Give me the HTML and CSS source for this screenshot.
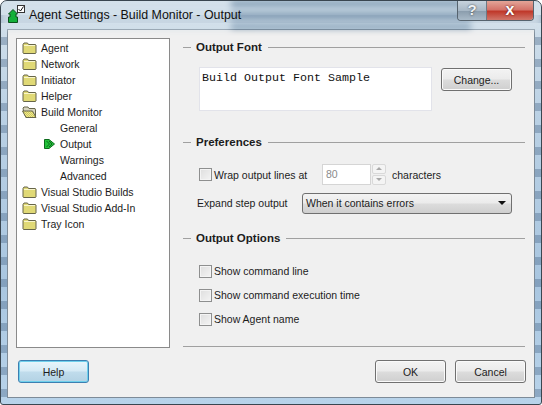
FILE: index.html
```html
<!DOCTYPE html>
<html lang="en">

<head>
  <meta charset="UTF-8">
  <title>Agent Settings - Build Monitor - Output</title>
  <link rel="stylesheet" href="styles.css">
</head>

<body>
  <svg class="defs" width="0" height="0">
    <pattern id="dither" width="2" height="2" patternUnits="userSpaceOnUse">
      <rect width="2" height="2" fill="#f0ea8c" />
      <rect width="1" height="1" fill="#cfc860" />
      <rect x="1" y="1" width="1" height="1" fill="#cfc860" />
    </pattern>
    <symbol id="folder" viewBox="0 0 14 12">
      <path d="M0.5 2.5 L1.5 1 L5 1 L6 2.5 L13 2.5 L13.5 3 L13.5 11 L13 11.5 L1 11.5 L0.5 11 Z" fill="url(#dither)" stroke="#66654a" />
      <path d="M1.5 3.5 L12.5 3.5" stroke="#f8f5cc" />
    </symbol>
    <symbol id="folder-open" viewBox="0 0 15 12">
      <path d="M1.5 5 L1 2 L2 1 L6 1 L7 2.5 L13 2.5 L13.5 4 L13.5 11.5 L4 11.5 Z" fill="#d8d6c0" stroke="#66654a" />
      <path d="M0.5 5 L10.5 5 L14 11.5 L4 11.5 Z" fill="url(#dither)" stroke="#66654a" />
    </symbol>
  </svg>

  <div class="window">
    <div class="glass"></div>

    <div class="titlebar">
      <svg class="app-icon" width="17" height="19" viewBox="0 0 17 19">
        <path d="M0.5 10 L5 5.5 L9.5 10 L8 10 L8 13 L9.5 13 L9.5 18.5 L0.5 18.5 L0.5 13 L2 13 L2 10 Z" fill="#12b03a" stroke="#0a4f1c" />
        <rect x="9.5" y="1.5" width="7" height="7" fill="#fff" stroke="#333" />
        <path d="M10.5 5 L12.5 7 L15.5 2.5" fill="none" stroke="#111" />
      </svg>
      <span class="title">Agent Settings - Build Monitor - Output</span>
      <div class="caption">
        <span class="caption-help">?</span>
        <span class="caption-close">x</span>
      </div>
    </div>

    <div class="client">
      <div class="main">
        <ul class="tree">
          <li><svg class="fold"><use href="#folder" /></svg>Agent</li>
          <li><svg class="fold"><use href="#folder" /></svg>Network</li>
          <li><svg class="fold"><use href="#folder" /></svg>Initiator</li>
          <li><svg class="fold"><use href="#folder" /></svg>Helper</li>
          <li><svg class="fold"><use href="#folder-open" /></svg>Build Monitor</li>
          <li class="child">General</li>
          <li class="child current">
            <svg class="arrow" width="11" height="10" viewBox="0 0 11 10">
              <path d="M0.5 0.5 L5 0.5 L10.5 5 L5 9.5 L0.5 9.5 Z" fill="#22c33a" stroke="#0c6a1c" />
              <path d="M2.5 2 L5.5 5 L2.5 8 M5 2 L8 5 L5 8" fill="none" stroke="#0c6a1c" />
            </svg>Output
          </li>
          <li class="child">Warnings</li>
          <li class="child">Advanced</li>
          <li><svg class="fold"><use href="#folder" /></svg>Visual Studio Builds</li>
          <li><svg class="fold"><use href="#folder" /></svg>Visual Studio Add-In</li>
          <li><svg class="fold"><use href="#folder" /></svg>Tray Icon</li>
        </ul>

        <div class="panel">
          <h2 class="heading">Output Font</h2>
          <div class="font-row">
            <div class="sample">Build Output Font Sample</div>
            <button class="btn">Change...</button>
          </div>

          <h2 class="heading prefs">Preferences</h2>
          <div class="wrap-row">
            <span class="check"></span>
            <span class="wrap-label">Wrap output lines at</span>
            <span class="spin-input">80</span>
            <span class="spin">
              <span class="spin-up"></span>
              <span class="spin-down"></span>
            </span>
            <span class="chars">characters</span>
          </div>
          <div class="expand-row">
            <span>Expand step output</span>
            <div class="combo">When it contains errors<span class="combo-arrow"></span></div>
          </div>

          <h2 class="heading options">Output Options</h2>
          <div class="check-list">
            <div class="check-row"><span class="check"></span>Show command line</div>
            <div class="check-row"><span class="check"></span>Show command execution time</div>
            <div class="check-row"><span class="check"></span>Show Agent name</div>
          </div>

          <div class="rule"></div>
        </div>
      </div>

      <div class="footer">
        <button class="btn btn-focus">Help</button>
        <div class="footer-right">
          <button class="btn">OK</button>
          <button class="btn">Cancel</button>
        </div>
      </div>
    </div>
  </div>
</body>

</html>
```

FILE: styles.css
```css
html,
body {
  margin: 0;
  height: 100%;
  background: #fff;
}

body {
  font-family: "Liberation Sans", Arial, sans-serif;
  font-size: 10.5px;
  color: #1c1c1c;
  overflow: hidden;
}

.defs {
  display: block;
  height: 0;
}

.window {
  position: relative;
  box-sizing: border-box;
  width: 542px;
  height: 405px;
  border: 1px solid #3a4650;
  border-radius: 7px 7px 3px 3px;
  overflow: hidden;
  background:
    repeating-linear-gradient(transparent 0, transparent 14px, rgba(60, 90, 125, 0.35) 14px, rgba(60, 90, 125, 0.35) 22px),
    linear-gradient(#d5e2ec, #b9d0e4 30%, #a9c6e0 70%, #b8d3ea);
}

/* blurred desktop behind the aero frame */
.glass {
  position: absolute;
  top: 0;
  left: 0;
  width: 100%;
  height: 28px;
  background:
    repeating-linear-gradient(#5f7f9c 0, #5f7f9c 5px, #c6d6e3 5px, #c6d6e3 12px) 230px 0 / 240px 100% no-repeat,
    #d3e0ea;
  filter: blur(3px);
  opacity: 0.8;
}

.titlebar {
  position: relative;
  display: flex;
  align-items: flex-start;
  height: 28px;
  padding-left: 7px;
}

.app-icon {
  margin-top: 3px;
}

.title {
  margin-left: 4px;
  margin-top: 4px;
  font-size: 12.4px;
  line-height: 20px;
  color: #111;
}

.caption {
  display: flex;
  margin-left: auto;
  margin-right: 7px;
  height: 19px;
  border: 1px solid #56636e;
  border-top: none;
  border-radius: 0 0 4px 4px;
  overflow: hidden;
}

.caption-help {
  width: 28px;
  text-align: center;
  font-size: 15px;
  font-weight: 700;
  line-height: 18px;
  color: #eef2f5;
  text-shadow: 0 0 2px #333;
  background: linear-gradient(#c7d3dd, #a8b8c6 50%, #8c9eae 55%, #a9bac8);
  border-right: 1px solid #6d7a85;
}

.caption-close {
  width: 46px;
  text-align: center;
  font-size: 16px;
  font-weight: 700;
  line-height: 17px;
  color: #fff;
  text-shadow: 0 0 2px #400;
  background: linear-gradient(#e3a598, #d4746a 45%, #c0392b 55%, #d0766a);
}

.client {
  box-sizing: border-box;
  width: 528px;
  height: 369px;
  margin-left: 6px;
  border: 1px solid #7d8b98;
  background: #f0f0f0;
  padding: 8px 8px 0;
}

.main {
  display: flex;
  height: 310px;
}

.tree {
  box-sizing: border-box;
  width: 154px;
  margin: 0;
  padding: 1px 0 0 5px;
  list-style: none;
  background: #fff;
  border: 1px solid #8a8a8a;
}

.tree li {
  display: flex;
  align-items: center;
  height: 16px;
  white-space: nowrap;
}

.fold {
  width: 15px;
  height: 12px;
  margin-right: 4px;
}

.tree .child {
  padding-left: 38px;
}

.tree .current {
  padding-left: 22px;
}

.arrow {
  margin-right: 5px;
}

.panel {
  display: flex;
  flex-direction: column;
  flex: 1;
  margin-left: 13px;
  margin-right: 1px;
}

.heading {
  display: flex;
  align-items: center;
  margin: 0;
  height: 18px;
  font-size: 11.5px;
  font-weight: 700;
  white-space: nowrap;
}

.heading::before {
  content: "";
  width: 8px;
  height: 1px;
  margin-right: 5px;
  background: #a0a0a0;
}

.heading::after {
  content: "";
  flex: 1;
  height: 1px;
  margin-left: 6px;
  background: #a0a0a0;
}

.font-row {
  display: flex;
  align-items: flex-start;
  margin-top: 11px;
  margin-left: 16px;
}

.sample {
  box-sizing: border-box;
  width: 233px;
  height: 44px;
  padding: 3px 3px 3px 2px;
  font-family: "Liberation Mono", monospace;
  font-size: 11.67px;
  line-height: 14px;
  color: #111;
  background: #fff;
  border: 1px solid #e2e3ea;
}

.btn {
  box-sizing: border-box;
  width: 71px;
  height: 23px;
  padding: 0;
  font: inherit;
  color: #1c1c1c;
  background: linear-gradient(#f3f3f3, #ebebeb 48%, #dcdcdc 52%, #cfcfcf);
  border: 1px solid #707070;
  border-radius: 3px;
  box-shadow: inset 0 0 0 1px #fafafa;
}

.font-row .btn {
  margin-left: 9px;
  margin-top: 1px;
}

.btn-focus {
  background: linear-gradient(#e8f6fc, #d5eaf5 48%, #c0dcec 52%, #b3d2e4);
  border-color: #3c7fb1;
  box-shadow: inset 0 0 0 1px #6fd0ec;
}

.prefs {
  margin-top: 22px;
}

.wrap-row {
  display: flex;
  align-items: center;
  height: 21px;
  margin-top: 13px;
  margin-left: 16px;
}

.check {
  box-sizing: border-box;
  flex: none;
  width: 13px;
  height: 13px;
  margin-right: 2px;
  border: 1px solid #8e8f8f;
  background: linear-gradient(135deg, #dedede, #f4f4f4);
  box-shadow: inset 0 0 0 1px #f4f4f4;
}

.wrap-label {
  width: 108px;
  white-space: nowrap;
}

.spin-input {
  box-sizing: border-box;
  width: 49px;
  height: 21px;
  padding-left: 3px;
  line-height: 19px;
  color: #8a8a8a;
  background: #fff;
  border: 1px solid #d5d5d5;
}

.spin {
  display: flex;
  flex-direction: column;
  justify-content: space-between;
  width: 14px;
  height: 21px;
  margin-left: 1px;
}

.spin-up,
.spin-down {
  position: relative;
  box-sizing: border-box;
  height: 10px;
  background: #f4f4f4;
  border: 1px solid #d9d9d9;
  border-radius: 2px;
}

.spin-up::after,
.spin-down::after {
  content: "";
  position: absolute;
  left: 3px;
  top: 2px;
  border-left: 3px solid transparent;
  border-right: 3px solid transparent;
}

.spin-up::after {
  border-bottom: 3px solid #a8a8a8;
}

.spin-down::after {
  border-top: 3px solid #a8a8a8;
}

.chars {
  margin-left: 6px;
}

.expand-row {
  display: flex;
  align-items: center;
  margin-top: 7px;
  margin-left: 14px;
  height: 22px;
  white-space: nowrap;
}

.combo {
  box-sizing: border-box;
  display: flex;
  align-items: center;
  justify-content: space-between;
  width: 210px;
  height: 21px;
  margin-left: auto;
  margin-right: 13px;
  padding: 0 5px 0 3px;
  background: linear-gradient(#f3f3f3, #ebebeb 48%, #dcdcdc 52%, #cfcfcf);
  border: 1px solid #707070;
  border-radius: 3px;
}

.combo-arrow {
  border-left: 4px solid transparent;
  border-right: 4px solid transparent;
  border-top: 4px solid #111;
}

.options {
  margin-top: 15px;
}

.check-list {
  margin-top: 12px;
  margin-left: 16px;
}

.check-row {
  display: flex;
  align-items: center;
  height: 24px;
}

.rule {
  height: 1px;
  margin-top: auto;
  margin-bottom: 1px;
  background: #a0a0a0;
}

.footer {
  display: flex;
  justify-content: space-between;
  margin-top: 12px;
  padding: 0 0 0 2px;
}

.footer-right {
  display: flex;
  gap: 9px;
}
```
